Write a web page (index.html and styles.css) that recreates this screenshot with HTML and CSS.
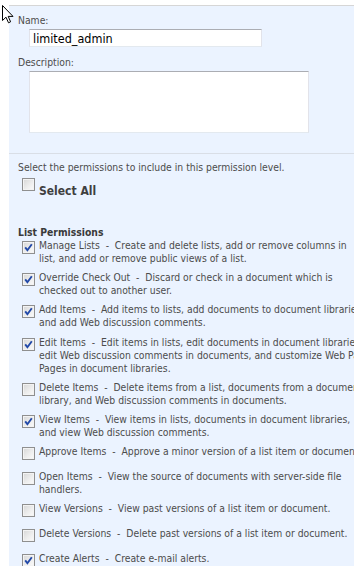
FILE: index.html
```html
<!DOCTYPE html>
<html>
<head>
<meta charset="utf-8">
<link rel="stylesheet" href="styles.css">
</head>
<body>
<div class="cursor">
  <svg width="13" height="20" viewBox="0 0 13 20"><path d="M1.5 1.5 V16.5 L5 13.2 L7.5 18.8 L9.6 17.8 L7.2 12.4 H12 Z" fill="#fff" stroke="#000" stroke-width="1" stroke-linejoin="miter"/></svg>
</div>
<div class="panel">
  <section class="props">
    <div class="label">Name:</div>
    <input class="name-input" type="text" value="limited_admin">
    <div class="label label-desc">Description:</div>
    <textarea class="desc-input"></textarea>
  </section>
  <section class="perms">
    <p class="intro">Select the permissions to include in this permission level.</p>
    <div class="select-all"><span class="cb"></span><b>Select All</b></div>
    <h3 class="group">List Permissions</h3>
    <ul class="perm-list">
      <li class="perm"><span class="cb on"><svg viewBox="0 0 11 11"><path d="M2.2 5.4 L4.4 8.2 L8.8 2.2"/></svg></span><span class="desc"><span class="ln">Manage Lists&nbsp; -&nbsp; Create and delete lists, add or remove columns in</span><span class="ln">list, and add or remove public views of a list.</span></span></li>
      <li class="perm"><span class="cb on"><svg viewBox="0 0 11 11"><path d="M2.2 5.4 L4.4 8.2 L8.8 2.2"/></svg></span><span class="desc"><span class="ln">Override Check Out&nbsp; -&nbsp; Discard or check in a document which is</span><span class="ln">checked out to another user.</span></span></li>
      <li class="perm"><span class="cb on"><svg viewBox="0 0 11 11"><path d="M2.2 5.4 L4.4 8.2 L8.8 2.2"/></svg></span><span class="desc"><span class="ln">Add Items&nbsp; -&nbsp; Add items to lists, add documents to document libraries,</span><span class="ln">and add Web discussion comments.</span></span></li>
      <li class="perm"><span class="cb on"><svg viewBox="0 0 11 11"><path d="M2.2 5.4 L4.4 8.2 L8.8 2.2"/></svg></span><span class="desc"><span class="ln">Edit Items&nbsp; -&nbsp; Edit items in lists, edit documents in document libraries,</span><span class="ln">edit Web discussion comments in documents, and customize Web Part</span><span class="ln">Pages in document libraries.</span></span></li>
      <li class="perm"><span class="cb"></span><span class="desc"><span class="ln">Delete Items&nbsp; -&nbsp; Delete items from a list, documents from a document</span><span class="ln">library, and Web discussion comments in documents.</span></span></li>
      <li class="perm"><span class="cb on"><svg viewBox="0 0 11 11"><path d="M2.2 5.4 L4.4 8.2 L8.8 2.2"/></svg></span><span class="desc"><span class="ln">View Items&nbsp; -&nbsp; View items in lists, documents in document libraries,</span><span class="ln">and view Web discussion comments.</span></span></li>
      <li class="perm"><span class="cb"></span><span class="desc"><span class="ln">Approve Items&nbsp; -&nbsp; Approve a minor version of a list item or document.</span></span></li>
      <li class="perm"><span class="cb"></span><span class="desc"><span class="ln">Open Items&nbsp; -&nbsp; View the source of documents with server-side file</span><span class="ln">handlers.</span></span></li>
      <li class="perm"><span class="cb"></span><span class="desc"><span class="ln">View Versions&nbsp; -&nbsp; View past versions of a list item or document.</span></span></li>
      <li class="perm"><span class="cb"></span><span class="desc"><span class="ln">Delete Versions&nbsp; -&nbsp; Delete past versions of a list item or document.</span></span></li>
      <li class="perm"><span class="cb on"><svg viewBox="0 0 11 11"><path d="M2.2 5.4 L4.4 8.2 L8.8 2.2"/></svg></span><span class="desc"><span class="ln">Create Alerts&nbsp; -&nbsp; Create e-mail alerts.</span></span></li>
    </ul>
  </section>
</div>
</body>
</html>
```
FILE: styles.css
```css
html, body {
  margin: 0;
  padding: 0;
  overflow: hidden;
}

body {
  background: #ffffff;
  font-family: "DejaVu Sans Condensed", "DejaVu Sans", sans-serif;
  font-stretch: condensed;
  font-size: 10.3px;
  color: #4c4c4c;
}

.cursor {
  position: absolute;
  left: 1px;
  top: 4px;
  line-height: 0;
}

.panel {
  margin: 5px 0 0 9px;
  border-top: 1px solid #d6d6d6;
}

.props {
  background: #ebf3ff;
  padding: 8px 0 20px 9px;
  border-bottom: 1px solid #d9dee6;
}

.label {
  line-height: 13px;
}

.label-desc {
  margin-top: 9px;
}

.name-input {
  display: block;
  box-sizing: border-box;
  margin: 2px 0 0 11px;
  width: 233px;
  height: 18px;
  padding: 0 3px;
  border: 1px solid;
  border-color: #abadb3 #e2e3ea #e3e9ef #e2e3ea;
  background: #ffffff;
  font-family: "DejaVu Sans Condensed", "DejaVu Sans", sans-serif;
  font-stretch: condensed;
  font-size: 12.5px;
  color: #000000;
  outline: none;
}

.desc-input {
  display: block;
  box-sizing: border-box;
  margin: 2px 0 0 11px;
  width: 280px;
  height: 62px;
  padding: 0;
  border: 1px solid;
  border-color: #abadb3 #e2e3ea #e3e9ef #e2e3ea;
  background: #ffffff;
  resize: none;
  outline: none;
}

.perms {
  background: #ebf3ff;
  padding: 7px 0 20px 9px;
}

.intro {
  margin: 0;
  line-height: 13px;
}

.select-all {
  display: flex;
  align-items: flex-start;
}

.select-all .cb {
  margin: 4px 4px 0 4px;
}

.select-all b {
  font-size: 12px;
  line-height: 16px;
  margin-top: 9px;
  color: #3f3f3f;
}

.group {
  margin: 27px 0 0;
  font-size: 10.3px;
  line-height: 13px;
  font-weight: bold;
  color: #3a3a3a;
}

.perm-list {
  list-style: none;
  margin: 0;
  padding: 0;
}

.perm {
  display: flex;
  align-items: flex-start;
  padding-bottom: 6px;
}

.perm .cb {
  margin: 2px 4px 4px 4px;
}

.desc {
  line-height: 13.1px;
}

.ln {
  display: block;
  white-space: nowrap;
}

.cb {
  flex: none;
  position: relative;
  width: 13px;
  height: 13px;
  box-sizing: border-box;
  border: 1px solid #8f8f8f;
  background: linear-gradient(135deg, #d6d6d6 0%, #ededed 55%, #fbfbfb 100%);
  box-shadow: inset 0 0 0 1px #f3f3f3;
}

.cb svg {
  position: absolute;
  left: 0;
  top: 0;
  width: 11px;
  height: 11px;
}

.cb svg path {
  fill: none;
  stroke: #2249a8;
  stroke-width: 1.9;
}
```
